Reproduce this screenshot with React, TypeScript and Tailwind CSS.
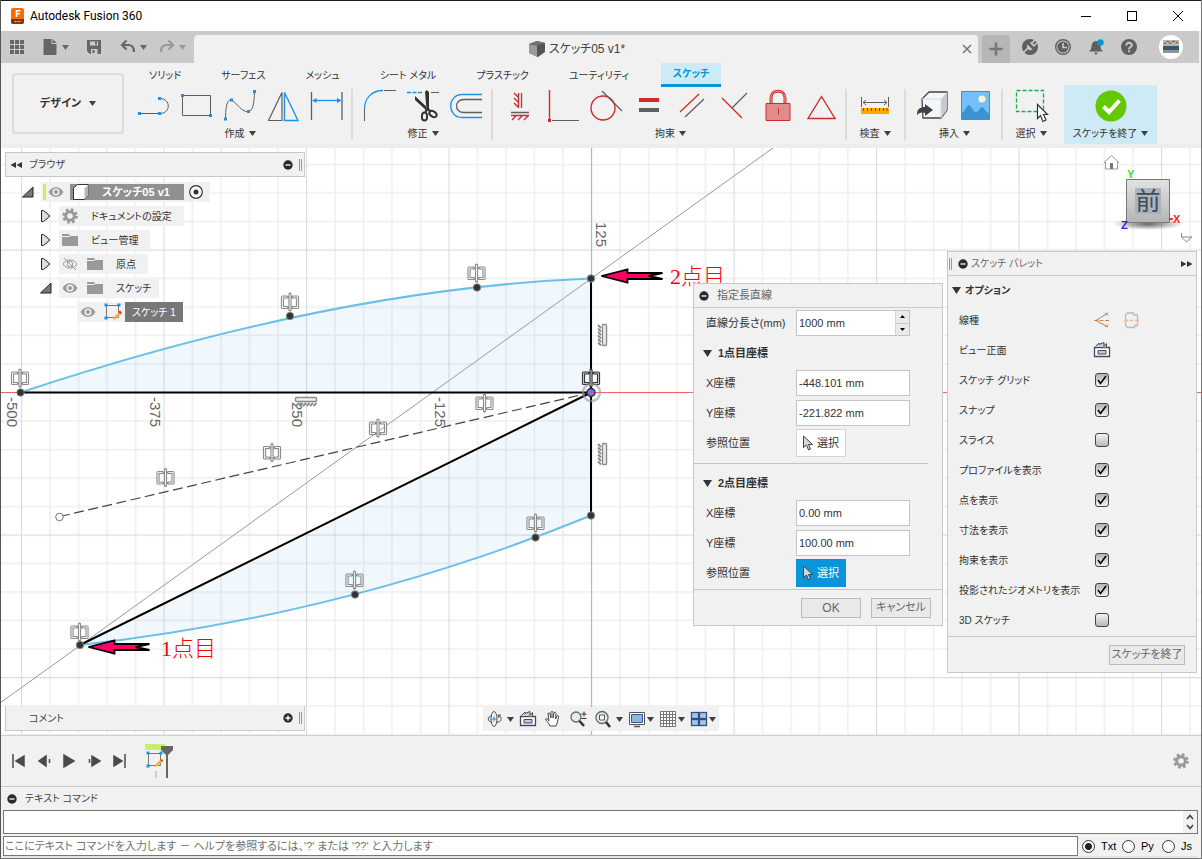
import React from "react";

const BLUE = "#1e90e8";
const GREY = "#5f5f5f";
const RED = "#d02a2a";

const Caret = ({ className = "text-[#404040]" }: { className?: string }) => (
  <svg width="7" height="5" viewBox="0 0 7 5" className={className}>
    <path d="M0 0h7L3.5 5z" fill="currentColor" />
  </svg>
);

const Dot = ({ x, y }: { x: number; y: number }) => (
  <rect x={x - 1.5} y={y - 1.5} width="3" height="3" fill={BLUE} />
);

const Icon = ({
  children,
  size = 32,
}: {
  children: React.ReactNode;
  size?: number;
}) => (
  <svg width={size} height={size} viewBox={`0 0 ${size} ${size}`} fill="none">
    {children}
  </svg>
);

const TitleBar = () => (
  <header className="flex h-[31px] items-center border-t border-[#1a1a1a] bg-white pl-[9px] text-black">
    <Icon size={16}>
      <rect x="1" width="13" height="16" rx="2" fill="#ff6b00" />
      <path d="M1 11h13v3a2 2 0 0 1-2 2H3a2 2 0 0 1-2-2z" fill="#8c3300" />
      <path d="M6.500 9V2.700h4M6.500 5.700h3.200" stroke="#fff" strokeWidth="1.600" />
      <path d="M4.500 13.500h6" stroke="#e8c8b0" strokeDasharray="1.500 .7" />
    </Icon>
    <h1 className="ml-1 flex-1 font-[Roboto,sans-serif] text-[12px]">
      Autodesk Fusion 360
    </h1>
    <button aria-label="Minimize" className="flex w-[46px] justify-center">
      <Icon size={12}>
        <path d="M1 6.500h10" stroke="#000" />
      </Icon>
    </button>
    <button aria-label="Maximize" className="flex w-[46px] justify-center">
      <Icon size={12}>
        <rect x="1.500" y="1.500" width="9" height="9" stroke="#000" />
      </Icon>
    </button>
    <button aria-label="Close" className="flex w-[46px] justify-center">
      <Icon size={12}>
        <path d="M1 1l10 10M11 1L1 11" stroke="#000" />
      </Icon>
    </button>
  </header>
);

const QuickBar = () => (
  <div className="mr-0.5 flex h-8 items-end bg-[#cacaca] text-[#5f5f5f]">
    <div className="flex h-8 w-[193px] shrink-0 items-center pl-[8px]">
      <button aria-label="Data panel">
        <Icon size={16}>
          {[1, 6, 11].map((x) =>
            [1, 6, 11].map((y) => (
              <rect key={`${x}-${y}`} x={x} y={y} width="4" height="4" fill="#666" />
            )),
          )}
        </Icon>
      </button>
      <button aria-label="File" className="ml-[17px] flex items-center gap-1">
        <Icon size={16}>
          <path d="M1.500 0h8v5h5v10a1 1 0 0 1-1 1h-12z" fill="#666" />
          <path d="M10.500 0l4 4h-4z" fill="#666" />
        </Icon>
        <Caret className="text-[#666]" />
      </button>
      <button aria-label="Save" className="ml-[17px]">
        <Icon size={16}>
          <path
            fillRule="evenodd"
            d="M1 1h14v14H4l-3-3zM4 2.500v4h8v-4zM5 10v5h6.500v-5z"
            fill="#666"
          />
          <path d="M9 2.500h2v3H9zM6.500 11h2v3h-2z" fill="#666" />
        </Icon>
      </button>
      <button aria-label="Undo" className="ml-[18px] flex items-center gap-1">
        <Icon size={16}>
          <path d="M6.500 1.500L2 6l4.500 4.500M2.500 6H8c4 0 6 2 6 7" stroke="#666" strokeWidth="2.200" />
        </Icon>
        <Caret className="text-[#666]" />
      </button>
      <button aria-label="Redo" className="ml-3 flex items-center gap-1">
        <Icon size={16}>
          <path d="M9.500 1.500L14 6l-4.500 4.500M13.500 6H8c-4 0-6 2-6 7" stroke="#999" strokeWidth="2.200" />
        </Icon>
        <Caret className="text-[#999]" />
      </button>
    </div>
    <div className="flex h-7 flex-1 items-center rounded-t bg-[#f1f1f1] pr-1">
      <div className="flex flex-1 items-center justify-center gap-1 text-[12px] text-[#404040]">
        <Icon size={16}>
          <path d="M0 3l8-3 8 2v9l-7 5-9-4z" fill="#555" />
          <path d="M0 3l8 1.500V16l-8-4z" fill="#9a9a9a" />
          <path d="M0 3l8-3 8 2-8 2.500z" fill="#707070" />
        </Icon>
        スケッチ05 v1*
      </div>
      <button aria-label="Close document" className="p-0.5">
        <Icon size={10}>
          <path d="M1 1l8 8M9 1L1 9" stroke="#777" strokeWidth="1.500" />
        </Icon>
      </button>
    </div>
    <button
      aria-label="New document"
      className="ml-1 flex h-7 w-7 items-center justify-center rounded-t bg-[#b6b6b6]"
    >
      <Icon size={14}>
        <path d="M7 .500v13M.500 7h13" stroke="#777" strokeWidth="2.600" />
      </Icon>
    </button>
    <div className="flex h-8 items-center gap-[17px] pr-4 pl-3">
      <button aria-label="Extensions">
        <Icon size={16}>
          <circle cx="8" cy="8" r="8" fill="#5f5f5f" />
          <path d="M1 14l5-5M8.500 3.500l4 4M13 1l-3 3M15 4l-3 2.500" stroke="#cacaca" strokeWidth="1.600" />
          <path d="M5.500 5.500l5 5c-3 2-7-1-5-5z" fill="#cacaca" />
        </Icon>
      </button>
      <button aria-label="Job status">
        <Icon size={16}>
          <circle cx="8" cy="8" r="7.300" stroke="#5f5f5f" strokeWidth="1.400" />
          <circle cx="8" cy="8" r="5.600" fill="#5f5f5f" />
          <path d="M8 4v4.500h4" stroke="#cacaca" strokeWidth="1.600" />
        </Icon>
      </button>
      <button aria-label="Notifications">
        <Icon size={16}>
          <path d="M1 12.500c3-2 2-5 3-7.500C5 3 6 2 8 2s3 1 4 3c1 2.500 0 5.500 3 7.500zM6 13.500h4l-2 2.500z" fill="#5f5f5f" />
          <circle cx="12.500" cy="3.500" r="3.200" fill="#0696d7" />
        </Icon>
      </button>
      <button aria-label="Help">
        <Icon size={16}>
          <circle cx="8" cy="8" r="8" fill="#5f5f5f" />
          <path d="M5.300 6.500C5.300 2.700 11 3 10.800 6.300 10.700 8 8 8 8 10.200M8 11.300v2" stroke="#cacaca" strokeWidth="2" />
        </Icon>
      </button>
      <button aria-label="Account" className="ml-[5px]">
        <Icon size={24}>
          <circle cx="12" cy="12" r="12" fill="#fff" />
          <rect x="4" y="5" width="16" height="6" fill="#b9b6a4" />
          <rect x="4" y="11" width="16" height="4" fill="#2f5685" />
          <rect x="4" y="15" width="16" height="3" fill="#8e9599" />
          <path d="M5 9l4-3 2 3 3-3 5 2M5 13h14" stroke="#555" strokeDasharray="3 1" />
        </Icon>
      </button>
    </div>
  </div>
);

const createIcons = [
  {
    name: "線分",
    art: (
      <>
        <path d="M2 24.500h20M22 24.500c11 0 11-15 0-15" stroke={GREY} />
        <Dot x={1.500} y={24.500} />
        <Dot x={21.500} y={24.500} />
        <Dot x={21.500} y={9.500} />
      </>
    ),
  },
  {
    name: "長方形",
    art: (
      <>
        <path d="M1.500 6.500h28v20h-28z" stroke={GREY} />
        <Dot x={1.500} y={6.500} />
        <Dot x={29.500} y={26.500} />
      </>
    ),
  },
  {
    name: "スプライン",
    art: (
      <>
        <path d="M1.500 31C1.500 18 3 9 8 11.500S18 24 25 22.500C30 20 30 12 30.500 3" stroke={GREY} />
        <Dot x={1.500} y={30} />
        <Dot x={7.500} y={11} />
        <Dot x={24.500} y={22.500} />
        <Dot x={30.500} y={2.500} />
      </>
    ),
  },
  {
    name: "ミラー",
    art: (
      <>
        <path d="M15 3.500v28H1.500z" stroke={GREY} strokeWidth="1.200" />
        <path d="M17.500 3.500v28H31z" stroke={BLUE} strokeWidth="1.400" />
      </>
    ),
  },
  {
    name: "スケッチ寸法",
    art: (
      <>
        <path d="M1.500 3v28M32 3v28" stroke={GREY} strokeWidth="1.300" />
        <path d="M4 11.500h25" stroke={BLUE} strokeWidth="1.300" />
        <path d="M2 11.500l4.500-2.500v5zM31.500 11.500L27 9v5z" fill={BLUE} />
      </>
    ),
  },
];

const modifyIcons = [
  {
    name: "フィレット",
    art: (
      <>
        <path d="M.500 20C.500 9 8 1.500 19 1.500" stroke={BLUE} strokeWidth="1.300" />
        <path d="M.500 20v12M20 1.500h12" stroke={GREY} />
      </>
    ),
  },
  {
    name: "トリム",
    art: (
      <>
        <path d="M0 3.500h16" stroke={BLUE} strokeDasharray="4 1.500" strokeWidth="1.300" />
        <path d="M24 3.500h8" stroke={GREY} />
        <path d="M18 3l1.500-2 2.500 2v17h-2.500zM8 7v4l12 11 2-2z" fill="#333" />
        <ellipse cx="17.500" cy="27.500" rx="2.600" ry="4" stroke="#333" strokeWidth="2" />
        <ellipse cx="26" cy="25" rx="4" ry="2.600" transform="rotate(35 26 25)" stroke="#333" strokeWidth="2" />
        <path d="M18.500 23l2-4 3 4" stroke="#333" strokeWidth="2.200" />
      </>
    ),
  },
  {
    name: "オフセット",
    art: (
      <>
        <path d="M32 5.500H12C-3 5.500-3 28.500 12 28.500h20" stroke={BLUE} strokeWidth="1.400" />
        <path d="M32 10.500H14c-10 0-10 13 0 13h18" stroke={GREY} strokeWidth="1.300" />
      </>
    ),
  },
];

const constraintIcons = [
  {
    name: "水平/垂直",
    art: (
      <>
        <path d="M14.500 4v15M10 4l4 4M10 9l4 4M10 14l4 4" stroke={RED} strokeWidth="1.400" />
        <path d="M17.500 4v15M7 23.500h18" stroke={GREY} strokeWidth="1.400" />
        <path d="M7 26.500h18M8 31l4-4M14 31l4-4M20 31l4-4" stroke={RED} strokeWidth="1.400" />
      </>
    ),
  },
  {
    name: "一致",
    art: (
      <>
        <path d="M2.500 1v31" stroke={RED} strokeWidth="1.400" />
        <path d="M5 31.500h27" stroke={GREY} />
        <path d="M1 30h3v3H1z" fill={RED} />
      </>
    ),
  },
  {
    name: "接線",
    art: (
      <>
        <circle cx="13" cy="19" r="12" stroke={RED} strokeWidth="1.400" />
        <path d="M12 2l20 20" stroke={GREY} strokeWidth="1.200" />
      </>
    ),
  },
  {
    name: "同じ値",
    art: (
      <>
        <path d="M6 9h20v4H6z" fill={RED} />
        <path d="M6 19h20v4H6z" fill={GREY} />
      </>
    ),
  },
  {
    name: "平行",
    art: (
      <>
        <path d="M4 23L23 5" stroke={RED} strokeWidth="1.300" />
        <path d="M9 28L28 10" stroke={GREY} strokeWidth="1.300" />
      </>
    ),
  },
  {
    name: "直交",
    art: (
      <>
        <path d="M3 9l20 20" stroke={RED} strokeWidth="1.300" />
        <path d="M13 19L28 4" stroke={GREY} strokeWidth="1.300" />
      </>
    ),
  },
  {
    name: "固定",
    art: (
      <>
        <path d="M9 14V9c0-9 14-9 14 0v5" stroke={RED} strokeWidth="3" />
        <path d="M9 14V9c0-9 14-9 14 0v5" stroke="#e8a0a0" strokeWidth="1" />
        <path d="M4 14.500h24v17H4z" fill="#de8c8c" stroke={RED} />
        <path d="M16.500 19.500v6" stroke={RED} />
      </>
    ),
  },
  {
    name: "中点",
    art: <path d="M16.500 7.500L30 29.500H3z" stroke={RED} strokeWidth="1.400" />,
  },
];

const inspectIcons = [
  {
    name: "計測",
    art: (
      <>
        <path d="M2.500 8v10M29.500 8v10M4 13.500h24M7 11l-3 2.500L7 16M25 11l3 2.500-3 2.500" stroke={GREY} />
        <path d="M2 19h28v6H2z" fill="#ffa800" />
        <path d="M4.500 19v3M8.500 19v3M12.500 19v3M16.500 19v3M20.500 19v3M24.500 19v3M28 19v3" stroke="#7a5000" />
      </>
    ),
  },
];

const insertIcons = [
  {
    name: "挿入",
    art: (
      <>
        <path d="M5 10l7-7h18v18l-6 8H6z" fill="#f4f6f8" stroke="#444" strokeWidth="1.300" />
        <path d="M24 10l6-7v18l-6 8z" fill="#c4cad0" />
        <path d="M5 10h19v19" stroke="#d8dce0" />
        <path d="M0 26c0-6 3-8 8-8v-3l8 6-8 6v-3c-4-1-6 0-8 2z" fill="#3d4248" />
      </>
    ),
  },
  {
    name: "キャンバス",
    art: (
      <>
        <path d="M1.500 2.500h28v28h-28z" fill="#74c0fa" stroke="#3a8fd0" />
        <path d="M2 24c4-3 5-8 7-8s4 7 7 7 4-5 6-5 3 5 7 6v6H2z" fill="#3d93cf" />
        <circle cx="22" cy="10" r="3.500" fill="#fdf6c8" />
      </>
    ),
  },
];

const selectIcons = [
  {
    name: "選択",
    art: (
      <>
        <path d="M1.500 1.500h27v21h-27z" stroke="#22a848" strokeDasharray="4 2" strokeWidth="1.300" />
        <path d="M22.500 15.500v14l3-3 2.500 6 3-1.500-2.500-5.500h4z" fill="#fff" stroke="#333" strokeWidth="1.200" />
      </>
    ),
  },
];

type ToolIcon = { name: string; art: React.ReactNode };

const ToolGroup = ({
  label,
  icons,
  className = "pr-[9px] pl-[11px]",
}: {
  label: string;
  icons: ToolIcon[];
  className?: string;
}) => (
  <div className={`flex flex-col items-center ${className}`}>
    <div className="flex gap-[11px] pt-0.5">
      {icons.map((icon) => (
        <button key={icon.name} aria-label={icon.name}>
          <svg width="32" height="34" viewBox="0 0 32 34" fill="none" overflow="visible">
            {icon.art}
          </svg>
        </button>
      ))}
    </div>
    <button className="flex items-center gap-1 text-[10px] leading-[21px]">
      {label} <Caret />
    </button>
  </div>
);

const Sep = () => <div className="mt-0.5 mb-1 w-0.5 bg-[#dcdcdc]" />;

const tabs = ["ソリッド", "サーフェス", "メッシュ", "シート メタル", "プラスチック", "ユーティリティ"];

const Ribbon = () => (
  <div className="flex border-b-4 border-[#ededed] bg-[#f1f1f1] pl-[11px] text-[#333]">
    <button className="my-2.5 flex w-28 items-center justify-center gap-2 rounded border-2 border-[#dcdcdc] text-[11px] font-bold">
      デザイン <Caret />
    </button>
    <div className="ml-[3px] flex-1">
      <nav className="flex h-6 items-center text-[10px]">
        <div className="flex gap-10 pr-8 pl-[22px]">
          {tabs.map((tab) => (
            <a key={tab} href="#" className="whitespace-nowrap">
              {tab}
            </a>
          ))}
        </div>
        <a
          href="#"
          className="flex h-6 w-[60px] items-center justify-center border-b-[3px] border-[#0696d7] bg-[#cdeaf6] font-bold text-[#0696d7]"
        >
          スケッチ
        </a>
      </nav>
      <div className="flex">
        <ToolGroup label="作成" icons={createIcons} />
        <Sep />
        <ToolGroup label="修正" icons={modifyIcons} />
        <Sep />
        <ToolGroup label="拘束" icons={constraintIcons} className="pr-2 pl-[11px]" />
        <Sep />
        <ToolGroup label="検査" icons={inspectIcons} className="pr-[13px] pl-3" />
        <Sep />
        <ToolGroup label="挿入" icons={insertIcons} />
        <Sep />
        <ToolGroup label="選択" icons={selectIcons} className="pr-[13px] pl-3" />
        <button className="-mt-0.5 ml-1 flex w-[93px] flex-col items-center justify-between bg-[#cdeaf6] pt-[5px] text-[10px]">
          <Icon size={32}>
            <circle cx="16" cy="16" r="15.500" fill="#64c800" />
            <path d="M8.500 16.500l5.500 5.500L24.500 10.500" stroke="#fff" strokeWidth="4" />
          </Icon>
          <span className="flex items-center gap-1 leading-[21px] whitespace-nowrap">
            スケッチを終了 <Caret />
          </span>
        </button>
      </div>
    </div>
  </div>
);

// ---- sketch canvas ----

const Glyph = ({ x, y, dark = false }: { x: number; y: number; dark?: boolean }) => {
  const d = "M-3-5h-4.500V5.500h4.500M3-5h4.500V5.500h-4.500M0-8V8";
  return (
    <g transform={`translate(${x} ${y})`} fill="none">
      <path d={d} stroke={dark ? "#333" : "#8a8a8a"} strokeWidth="3.200" strokeLinejoin="round" strokeLinecap="round" />
      <path d={d} stroke={dark ? "#b8c0c4" : "#f0f0f0"} strokeWidth="1.100" />
    </g>
  );
};

const Ruler = ({ x, y, angle = 0 }: { x: number; y: number; angle?: number }) => (
  <g transform={`translate(${x} ${y}) rotate(${angle})`} fill="#f0f0f0" stroke="#8a8a8a">
    <rect x="-10.500" y="-4.500" width="21" height="4" rx="1" strokeWidth="1.400" />
    <path d="M-10 4l3-3M-6.500 4l3-3M-3 4l3-3M.500 4l3-3M4 4l3-3M7.500 4l3-3" strokeWidth="1.800" />
  </g>
);

const points = [
  [20.5, 392.5],
  [290, 316],
  [477, 287.5],
  [591, 278.5],
  [591, 515.5],
  [535.5, 537.5],
  [355, 594.5],
  [80, 645],
];

const glyphs = [
  [20, 378],
  [290, 302],
  [476.5, 273],
  [484.5, 403],
  [378, 428],
  [272, 452.5],
  [165.5, 477.5],
  [535.5, 523],
  [354.5, 580],
  [79.5, 632],
];

const ARROW =
  "M601.500 276l26-6.500v3.500H662.500l-14 3 14 3h-35v3.500z";

const Sketch = () => (
  <svg className="absolute inset-0 h-full w-full" aria-hidden="true">
    <defs>
      <pattern id="grid" width="142.500" height="142.500" x="20" y="101.500" patternUnits="userSpaceOnUse">
        <path
          d="M29 0v142.500M57.500 0v142.500M86 0v142.500M114.500 0v142.500M0 29h142.500M0 57.500h142.500M0 86h142.500M0 114.500h142.500"
          stroke="#eee"
          strokeWidth="1.500"
        />
        <path d="M.500 0v142.500M0 .500h142.500" stroke="#dcdcdc" strokeWidth="1.300" />
      </pattern>
    </defs>
    <rect width="100%" height="100%" fill="#fff" />
    <rect width="100%" height="100%" fill="url(#grid)" />
    <g transform="translate(-1 -148)" fill="none">
      <path d="M0 392.500h3000" stroke="#f06464" strokeWidth="1.200" />
      <path d="M591.500 148v3000" stroke="#7ee07e" strokeWidth="1.200" />
      <g fill="#3fa9f5" fillOpacity=".08">
        <path d="M20.500 392.500C210 329.500 401 286 591 278.500v114z" />
        <path d="M80 645C250 626 421 585 591 515.500v-123z" />
      </g>
      <path d="M0 703L773 148" stroke="#999" />
      <path d="M60 516.500L591 392.500" stroke="#444" strokeWidth="1.200" strokeDasharray="10 4.500" />
      <path
        d="M20.500 392.500C210 329.500 401 286 591 278.500M80 645C250 626 421 585 591 515.500"
        stroke="#6cc0e8"
        strokeWidth="2"
      />
      <path d="M20.500 392.500H591M591 278.500v237M80 645L591 392.500" stroke="#000" strokeWidth="2" />
      <g
        fill="#666"
        className="font-['Liberation_Sans',sans-serif] text-[15px]"
      >
        <text transform="translate(7 397) rotate(90)">-500</text>
        <text transform="translate(150 397) rotate(90)">-375</text>
        <text transform="translate(292 402) rotate(90)">250</text>
        <text transform="translate(435 397) rotate(90)">-125</text>
        <text transform="translate(596 222) rotate(90)">125</text>
      </g>
      {glyphs.map(([x, y]) => (
        <Glyph key={`${x}-${y}`} x={x} y={y} />
      ))}
      <Glyph x={591} y={378} dark />
      <Ruler x={306} y={402} />
      <Ruler x={602} y={335} angle={90} />
      <Ruler x={602} y={454} angle={90} />
      {points.map(([x, y]) => (
        <circle key={`${x}-${y}`} cx={x} cy={y} r="3.700" fill="#333" stroke="#888" />
      ))}
      <circle cx="59.500" cy="517" r="3.800" stroke="#777" fill="#fff" />
      <circle cx="591.500" cy="392.500" r="8.500" stroke="#999" strokeOpacity=".6" strokeWidth="2.500" />
      <circle cx="591" cy="392.500" r="4" fill="#8a70c8" stroke="#33264d" strokeWidth="1.500" />
      <g fill="#ff0066" stroke="#000" strokeWidth="1.800">
        <path d={ARROW} />
        <path d={ARROW} transform="translate(-513 371)" />
      </g>
      <g fill="#f00" className="font-['Liberation_Serif','Noto_Sans_CJK_JP',serif] text-[22px] font-light">
        <text x="670" y="284">2点目</text>
        <text x="161" y="656">1点目</text>
      </g>
    </g>
  </svg>
);

const Minus = ({ plus = false }: { plus?: boolean }) => (
  <Icon size={10}>
    <circle cx="5" cy="5" r="4.700" fill="#2a2a2a" />
    <path d={plus ? "M2.500 5h5M5 2.500v5" : "M2.500 5h5"} stroke="#fff" strokeWidth="1.300" />
  </Icon>
);

const Eye = () => (
  <Icon size={16}>
    <path d="M.500 8C4 1.500 12 1.500 15.500 8 12 14.500 4 14.500.500 8z" fill="#999" />
    <circle cx="8" cy="8" r="3.600" fill="#f1f1f1" />
    <circle cx="8" cy="8" r="2" fill="#999" />
  </Icon>
);

const EyeOff = () => (
  <Icon size={16}>
    <path d="M1 8c3-5.500 11-5.500 14 0-3 5.500-11 5.500-14 0zM2 2l12 12" stroke="#999" />
    <circle cx="8" cy="8" r="2.800" stroke="#999" />
  </Icon>
);

const Folder = () => (
  <Icon size={16}>
    <path d="M0 2h7l1 2h8v10H0z" fill="#999" />
    <path d="M0 4.500h7.500L9 3" stroke="#f1f1f1" />
  </Icon>
);

const Gear = () => (
  <Icon size={16}>
    <circle cx="8" cy="8" r="6.300" stroke="#999" strokeWidth="3" strokeDasharray="2.600 2.350" />
    <circle cx="8" cy="8" r="4.300" stroke="#999" strokeWidth="3" />
  </Icon>
);

const SketchIcon = () => (
  <Icon size={18}>
    <path d="M2.500 2.500h12v12h-12z" stroke="#777" />
    <Dot x={2} y={2} />
    <Dot x={15} y={2} />
    <Dot x={2} y={15} />
    <path d="M9 17l1-3 5-5 2 2-5 5z" fill="#f5b041" />
    <path d="M14 9l2-1.500 2 2-1.500 2z" fill="#e84040" />
  </Icon>
);

const Cube = () => (
  <Icon size={18}>
    <path d="M1.500 5l4-3.500h11V12l-4 4.500h-11z" fill="#fff" stroke="#333" />
    <path d="M12.500 5.500l4-4V12l-4 4.500z" fill="#b0b8c0" />
  </Icon>
);

const Expand = ({ open = false }: { open?: boolean }) => (
  <button aria-label={open ? "Collapse" : "Expand"} className="mr-[7px] w-3">
    <Icon size={12}>
      {open ? (
        <path d="M11 1v10H.500z" fill="#777" stroke="#222" />
      ) : (
        <path d="M1.500.500h2L10 6l-6.500 5.500h-2z" fill="#ddd" stroke="#222" />
      )}
    </Icon>
  </button>
);

const chip = "flex h-5 items-center bg-[#f1f1f1]";

const BrowserPanel = () => (
  <div className="w-[300px]">
    <div className="flex h-[25px] items-center border border-[#c8c8c8] bg-[#f1f1f1] pr-0.5 pl-1">
      <Icon size={12}>
        <path d="M6 3v6L.500 6zM12 3v6L6.500 6z" fill="#333" />
      </Icon>
      <h2 className="ml-[7px] flex-1 text-[10px] text-[#444]">ブラウザ</h2>
      <button aria-label="Collapse browser">
        <Minus />
      </button>
      <span className="ml-1.5 h-3 w-[3px] border-x border-[#999]" />
    </div>
    <ul className="mt-[5px] flex flex-col gap-1 text-[10px]">
      <li className="flex items-center pl-[17px]">
        <Expand open />
        <div className={`${chip} w-[169px] gap-0.5 pl-0.5`}>
          <span className="h-4 w-[3px] bg-[#c5f06c]" />
          <Eye />
          <span className="ml-1 flex h-4 flex-1 items-center gap-3 bg-[#909090] pl-0.5 text-[11px] font-bold whitespace-nowrap text-white">
            <Cube /> スケッチ05 v1
          </span>
          <span className="pr-1.5 pl-0.5">
            <Icon size={16}>
              <circle cx="8" cy="8" r="6.300" stroke="#333" fill="#fff" strokeWidth="1.200" />
              <circle cx="8" cy="8" r="2.500" fill="#333" />
            </Icon>
          </span>
        </div>
      </li>
      <li className="flex items-center pl-[35px]">
        <Expand />
        <div className={`${chip} gap-[13px] pr-3 pl-[3px]`}>
          <Gear /> ドキュメントの設定
        </div>
      </li>
      <li className="flex items-center pl-[35px]">
        <Expand />
        <div className={`${chip} gap-[13px] pr-3 pl-[3px]`}>
          <Folder /> ビュー管理
        </div>
      </li>
      <li className="flex items-center pl-[35px]">
        <Expand />
        <div className={`${chip} pr-3 pl-[3px]`}>
          <EyeOff />
          <span className="mr-[13px] ml-[9px]">
            <Folder />
          </span>
          原点
        </div>
      </li>
      <li className="flex items-center pl-[35px]">
        <Expand open />
        <div className={`${chip} pr-2 pl-[3px]`}>
          <Eye />
          <span className="mr-[13px] ml-[9px]">
            <Folder />
          </span>
          スケッチ
        </div>
      </li>
      <li className="flex items-center pl-[72px]">
        <div className={`${chip} gap-2 px-[3px]`}>
          <Eye />
          <SketchIcon />
        </div>
        <span className="flex h-5 items-center bg-[#787878] px-[7px] text-white">
          スケッチ 1
        </span>
      </li>
    </ul>
  </div>
);

const CommentPanel = () => (
  <div className="flex h-[25px] w-[300px] items-center border border-t-0 border-[#c8c8c8] bg-[#f1f1f1] pr-0.5 pl-[23px]">
    <h2 className="flex-1 text-[10px] text-[#444]">コメント</h2>
    <button aria-label="Add comment">
      <Minus plus />
    </button>
    <span className="ml-1.5 h-3 w-[3px] border-x border-[#999]" />
  </div>
);

const Cursor = () => (
  <Icon size={16}>
    <path d="M4.500 1v11.500l3-2.500 2 5 2-1-2-4.500h4z" fill="#d0d8e0" stroke="#444" />
  </Icon>
);

const Field = ({ id, label, value }: { id: string; label: string; value: string }) => (
  <div className="flex h-[30px] items-center pl-3">
    <label htmlFor={id} className="w-[90px] whitespace-nowrap">
      {label}
    </label>
    <input
      id={id}
      defaultValue={value}
      className="h-[26px] w-[114px] border border-[#c4c4c4] bg-white px-0.5"
    />
  </div>
);

const PickRow = ({ active = false }: { active?: boolean }) => (
  <div className="flex h-[30px] items-center pl-3">
    <span className="w-[90px]">参照位置</span>
    <button
      className={`flex h-7 w-[50px] items-center justify-center gap-0.5 border pr-1 ${
        active
          ? "border-[#0696d7] bg-[#0a94da] text-white"
          : "border-[#d4d4d4] bg-white"
      }`}
    >
      <Cursor />
      選択
    </button>
  </div>
);

const SectionTitle = ({ children }: { children: React.ReactNode }) => (
  <h3 className="flex h-[30px] items-center gap-1.5 pl-[9px] font-bold">
    <svg width="9" height="7" viewBox="0 0 9 7">
      <path d="M0 0h9L4.500 7z" fill="#333" />
    </svg>
    {children}
  </h3>
);

const LineDialog = () => (
  <section className="absolute top-[135px] right-[258px] w-[250px] border border-[#c8c8c8] bg-[#f1f1f1] text-[11px] text-[#333]">
    <h2 className="flex h-6 items-center gap-2 border-b border-[#c8c8c8] pl-[5px] text-[#666]">
      <Minus /> 指定長直線
    </h2>
    <div className="flex h-[30px] items-center pl-3">
      <label htmlFor="length" className="w-[90px] whitespace-nowrap">
        直線分長さ(mm)
      </label>
      <div className="flex h-[26px] w-[114px] border border-[#c4c4c4] bg-white">
        <input id="length" defaultValue="1000 mm" className="min-w-0 flex-1 px-0.5" />
        <div className="flex w-3.5 flex-col border-l border-[#d4d4d4] bg-[#eaeaea]">
          <button aria-label="Increase" className="flex flex-1 items-center justify-center border-b border-[#ccc]">
            <svg width="5" height="3" viewBox="0 0 5 3">
              <path d="M0 3h5L2.500 0z" />
            </svg>
          </button>
          <button aria-label="Decrease" className="flex flex-1 items-center justify-center">
            <svg width="5" height="3" viewBox="0 0 5 3">
              <path d="M0 0h5L2.500 3z" />
            </svg>
          </button>
        </div>
      </div>
    </div>
    <SectionTitle>1点目座標</SectionTitle>
    <Field id="x1" label="X座標" value="-448.101 mm" />
    <Field id="y1" label="Y座標" value="-221.822 mm" />
    <PickRow />
    <hr className="mt-[5px] mr-3.5 mb-1 border-[#c4c4c4]" />
    <SectionTitle>2点目座標</SectionTitle>
    <Field id="x2" label="X座標" value="0.00 mm" />
    <Field id="y2" label="Y座標" value="100.00 mm" />
    <PickRow active />
    <div className="mt-px flex h-9 items-center justify-end gap-2.5 border-t border-[#c8c8c8] pr-[11px] text-[12px] text-[#666]">
      <button className="h-5 w-[60px] border border-[#bbb] bg-[#e9e9e9] leading-none">OK</button>
      <button className="h-5 w-[60px] border border-[#bbb] bg-[#e9e9e9] text-[11px] leading-none whitespace-nowrap">
        キャンセル
      </button>
    </div>
  </section>
);

const options = [
  { label: "スケッチ グリッド", on: true },
  { label: "スナップ", on: true },
  { label: "スライス", on: false },
  { label: "プロファイルを表示", on: true },
  { label: "点を表示", on: true },
  { label: "寸法を表示", on: true },
  { label: "拘束を表示", on: true },
  { label: "投影されたジオメトリを表示", on: true },
  { label: "3D スケッチ", on: false },
];

const LookAt = () => (
  <Icon size={18}>
    <path d="M1.500 6.500h15v9h-15z" fill="#fff" stroke="#444c58" strokeWidth="1.300" />
    <path d="M5 9.500h8v3.500H5z" fill="#c0cad8" stroke="#444c58" />
    <path d="M2.500 5.500L6 2v1.500L11 1.500v4l2.500-3v4" fill="#c8ced6" stroke="#444c58" />
  </Icon>
);

const SketchPalette = () => (
  <section className="absolute top-[103px] right-[4px] w-[250px] border border-[#c8c8c8] bg-[#f1f1f1] text-[10px] text-[#333]">
    <h2 className="flex h-6 items-center border-b border-[#c8c8c8] pr-[3px] pl-px text-[#666]">
      <span className="mr-1.5 h-3 w-[3px] border-x border-[#999]" />
      <Minus />
      <span className="ml-[3px] flex-1">スケッチ パレット</span>
      <Icon size={12}>
        <path d="M0 3v6l5.500-3zM6 3v6l5.500-3z" fill="#333" />
      </Icon>
    </h2>
    <h3 className="flex h-[29px] items-center gap-1 pl-1 text-[10px] font-bold">
      <svg width="9" height="7" viewBox="0 0 9 7">
        <path d="M0 0h9L4.500 7z" fill="#333" />
      </svg>
      オプション
    </h3>
    <div className="flex h-[30px] items-center pl-[11px]">
      <span className="w-[134px]">線種</span>
      <button aria-label="コンストラクション" className="mr-3">
        <Icon size={18}>
          <path d="M15 2L3 9.500 15 16" stroke="#888" />
          <path d="M1 9.500h16M12 2l4 3M12 16l4-3" stroke="#e08040" strokeDasharray="4 1.500" />
        </Icon>
      </button>
      <button aria-label="中心線">
        <Icon size={18}>
          <path d="M2.500 4l2-2h6v2h4v10.500h-3v2h-7l-2-2z" stroke="#bbb" strokeWidth="1.300" />
          <path d="M1 9.500h16" stroke="#f0b890" strokeDasharray="4 1.500" strokeWidth="1.300" />
        </Icon>
      </button>
    </div>
    <div className="flex h-[30px] items-center pl-[11px]">
      <span className="w-[134px]">ビュー正面</span>
      <button aria-label="ビュー正面">
        <LookAt />
      </button>
    </div>
    {options.map((option, i) => (
      <div key={option.label} className="flex h-[30px] items-center pl-[11px]">
        <label htmlFor={`option-${i}`} className="w-[136px] whitespace-nowrap">
          {option.label}
        </label>
        <span className="grid">
          <input
            id={`option-${i}`}
            type="checkbox"
            defaultChecked={option.on}
            className="peer col-start-1 row-start-1 h-3.5 w-3.5 appearance-none rounded-[3px] border border-[#444] bg-linear-to-b from-[#f4f4f4] to-[#b8b8b8] checked:from-[#b4b4b4] checked:to-[#f0f0f0]"
          />
          <svg
            viewBox="0 0 14 14"
            className="pointer-events-none col-start-1 row-start-1 hidden h-3.5 w-3.5 peer-checked:block"
          >
            <path d="M3 7l2.500 3.500L11 3" fill="none" stroke="#000" strokeWidth="1.500" />
          </svg>
        </span>
      </div>
    ))}
    <div className="mt-px flex h-9 items-center justify-end border-t border-[#c8c8c8] pr-[11px]">
      <button className="h-5 w-[76px] border border-[#bbb] bg-[#e9e9e9] text-[11px] leading-none whitespace-nowrap text-[#666]">
        スケッチを終了
      </button>
    </div>
  </section>
);

const ViewCube = () => (
  <svg
    width="100"
    height="96"
    viewBox="1102 152 100 96"
    fill="none"
    className="absolute top-1 right-[-1px]"
  >
    <defs>
      <linearGradient id="face" x1="0" y1="0" x2="0" y2="1">
        <stop offset="0" stopColor="#e2e2e2" />
        <stop offset="1" stopColor="#b4b4b4" />
      </linearGradient>
      <radialGradient id="shade">
        <stop offset="0" stopColor="#666" />
        <stop offset="1" stopColor="#666" stopOpacity="0" />
      </radialGradient>
    </defs>
    <path d="M1104 162.500l7.500-7 7.500 7h-1.500v6.500h-12v-6.500z" fill="#fff" stroke="#999" />
    <path d="M1110 163h3v6h-3z" fill="#777" />
    <ellipse cx="1148" cy="224" rx="35" ry="6" fill="url(#shade)" />
    <path d="M1126.500 179.500h43v43h-43z" fill="url(#face)" stroke="#777" />
    <path d="M1135 188h26v26h-26z" fill="#aab4c0" />
    <path d="M1169 219h4" stroke="red" strokeWidth="1.500" />
    <g className="font-['Liberation_Sans','Noto_Sans_CJK_JP',sans-serif] text-[11px] font-bold">
      <text x="1127" y="178" fill="#2be62b">Y</text>
      <text x="1173" y="223" fill="#f22">X</text>
      <text x="1121" y="229" fill="#22f">Z</text>
    </g>
    <text x="1148" y="210" textAnchor="middle" fill="#424b58" className="font-['Noto_Sans_CJK_JP',sans-serif] text-[25px]">
      前
    </text>
    <path d="M1181.500 233v4h10.500l-5.500 5-5-5" stroke="#888" />
  </svg>
);

const Glass = ({ children }: { children?: React.ReactNode }) => (
  <Icon size={18}>
    <circle cx="7" cy="7" r="5" fill="#e0eeee" stroke="#667" strokeWidth="1.300" />
    <path d="M10.500 11l4.500 5" stroke="#333" strokeWidth="2.600" />
    {children}
  </Icon>
);

const NavBar = () => (
  <div className="absolute bottom-1 left-1/2 flex h-6 -translate-x-1/2 items-center gap-[5px] bg-[#f1f1f1] px-[3px]">
    <button aria-label="Orbit" className="flex items-center gap-[3px]">
      <Icon size={18}>
        <ellipse cx="8" cy="9" rx="3" ry="7.500" stroke="#555" />
        <path d="M6 6C1 6 1 12 6 12M10 12c6 1 7-5 2-7l1 3M12 5l3 0" stroke="#555" />
        <path d="M8 6.500v5M5.500 9h5" stroke={BLUE} />
      </Icon>
      <Caret />
    </button>
    <button aria-label="Look at">
      <LookAt />
    </button>
    <button aria-label="Pan" className="ml-0.5">
      <Icon size={18}>
        <path
          d="M6 16c-1-3-4-5-4.500-7 1-1 2 0 3.500 2L4 4c0-1.500 1.500-1.500 2 0l1 4V2.500c0-1.500 2-1.500 2 0V8l1-5c.500-1.500 2-1 2 .500L11.500 9 13 6c1-1 2 0 1.500 1-1 4-1 6-2.500 9z"
          fill="#fff"
          stroke="#444"
        />
      </Icon>
    </button>
    <button aria-label="Zoom" className="ml-0.5">
      <Glass>
        <path d="M12.500 4h5M15 1.500v5M12.500 8.500h5" stroke="#333" />
      </Glass>
    </button>
    <button aria-label="Fit" className="ml-0.5 flex items-center gap-1">
      <Icon size={18}>
        <circle cx="8" cy="7.500" r="6" fill="#e0eeee" stroke="#667" strokeWidth="1.300" />
        <path d="M12 12l4 5" stroke="#333" strokeWidth="2.600" />
        <path d="M5.500 5h5v5h-5z" fill="#fff" stroke="#555" />
      </Icon>
      <Caret />
    </button>
    <button aria-label="Display settings" className="flex items-center gap-px">
      <Icon size={18}>
        <path d="M1.500 2.500h15v12h-15z" fill="#fff" stroke="#555" />
        <path d="M3.500 4.500h11v8h-11z" fill="#90b4e0" stroke="#3458a0" />
        <path d="M6 16.500h6" stroke="#555" strokeWidth="1.500" />
      </Icon>
      <Caret />
    </button>
    <button aria-label="Grid and snaps" className="flex items-center gap-px">
      <Icon size={18}>
        <path
          d="M1.500 1.500h15v15h-15zM4.500 1.500v15M7.500 1.500v15M10.500 1.500v15M13.500 1.500v15M1.500 4.500h15M1.500 7.500h15M1.500 10.500h15M1.500 13.500h15"
          fill="#fff"
          stroke="#777"
        />
      </Icon>
      <Caret />
    </button>
    <button aria-label="Viewports" className="flex items-center gap-px">
      <Icon size={18}>
        {[
          [1.5, 2.5],
          [9.5, 2.5],
          [1.5, 9.5],
          [9.5, 9.5],
        ].map(([x, y]) => (
          <rect key={`${x}-${y}`} x={x} y={y} width="7" height="6" fill="#a8c4ea" stroke="#34507c" strokeWidth="1.300" />
        ))}
      </Icon>
      <Caret />
    </button>
  </div>
);

const playback = [
  { name: "Start", d: "M2 3v14M13 5v10L5 10z" },
  { name: "Step back", d: "M10 5v10L3 10zM13.500 8v4" },
  { name: "Play", d: "M3 4v12l10-6z" },
  { name: "Step forward", d: "M6 5v10l8-5zM3.500 8v4" },
  { name: "End", d: "M14 3v14M3 5v10l8-5z" },
];

const Timeline = () => (
  <div className="flex h-[51px] items-center border-t border-[#d0d0d0] bg-[#f1f1f1] pr-3 pl-2.5">
    <div className="flex gap-2">
      {playback.map((item) => (
        <button key={item.name} aria-label={item.name}>
          <svg width="17" height="20" viewBox="0 0 17 20">
            <path d={item.d} fill="#4a4a4a" stroke="#4a4a4a" strokeWidth="1.500" />
          </svg>
        </button>
      ))}
    </div>
    <svg width="32" height="40" viewBox="0 0 32 40" fill="none" className="ml-4">
      <path d="M1 3h20v6H1z" fill="#c5f06c" />
      <path d="M4.500 12.500h12v12h-12z" stroke="#777" />
      <Dot x={4} y={12} />
      <Dot x={17} y={12} />
      <Dot x={4} y={25} />
      <path d="M11 26l1-3 5-5 2 2-5 5z" fill="#f5b041" />
      <path d="M16 19l2-1 1 2-1 1z" fill="#e84040" />
      <path d="M12 30v7" stroke="#ccc" strokeWidth="2" />
      <path d="M17 5h12v4l-5 5v23h-2V14l-5-5z" fill="#666" />
    </svg>
    <button aria-label="Timeline settings" className="ml-auto">
      <Gear />
    </button>
  </div>
);

const TextCommands = () => (
  <section className="border-t border-[#c8c8c8] bg-[#f1f1f1] pr-[3px] pl-0.5">
    <h2 className="flex h-[23px] items-center gap-2 pl-1 text-[10px] text-[#444]">
      <Minus /> テキスト コマンド
    </h2>
    <div className="flex h-6 border border-[#777] bg-white">
      <textarea aria-label="テキスト コマンド" className="min-w-0 flex-1 resize-none" />
      <div className="flex w-3.5 flex-col items-center justify-between bg-[#f1f1f1] py-[3px]">
        <button aria-label="Scroll up" className="leading-none">
          <svg width="8" height="6" viewBox="0 0 8 6" fill="none">
            <path d="M1 5l3-3.500L7 5" stroke="#444" strokeWidth="1.600" />
          </svg>
        </button>
        <button aria-label="Scroll down" className="leading-none">
          <svg width="8" height="6" viewBox="0 0 8 6" fill="none">
            <path d="M1 1l3 3.500L7 1" stroke="#444" strokeWidth="1.600" />
          </svg>
        </button>
      </div>
    </div>
    <div className="mt-0.5 flex items-center gap-1 border-b-2 border-[#e4e4e4] text-[11px]">
      <input
        aria-label="コマンド入力"
        placeholder="ここにテキスト コマンドを入力します － ヘルプを参照するには、'?' または '??' と入力します"
        className="h-5 min-w-0 flex-1 border border-[#777] bg-white px-px placeholder:text-[#707070]"
      />
      {["Txt", "Py", "Js"].map((mode) => (
        <label key={mode} className="flex min-w-9 items-center gap-1.5 text-black">
          <input
            type="radio"
            name="mode"
            defaultChecked={mode === "Txt"}
            className="h-[13px] w-[13px] appearance-none rounded-full border border-[#333] bg-white checked:bg-[radial-gradient(#222_0_3px,#fff_4px)]"
          />
          {mode}
        </label>
      ))}
    </div>
  </section>
);

const App = () => {
  return (
    <div className="flex min-h-screen flex-col border-r border-b border-l border-r-[#777] border-b-[#777] border-l-[#555] bg-[#f1f1f1] font-['Liberation_Sans','Noto_Sans_CJK_JP',sans-serif] text-[#333] [font-feature-settings:'palt']">
      <TitleBar />
      <QuickBar />
      <Ribbon />
      <main className="relative flex min-h-[560px] flex-1 flex-col justify-between overflow-hidden py-1 pl-1">
        <Sketch />
        <div className="relative">
          <BrowserPanel />
        </div>
        <div className="relative">
          <CommentPanel />
        </div>
        <ViewCube />
        <NavBar />
        <LineDialog />
        <SketchPalette />
      </main>
      <Timeline />
      <TextCommands />
    </div>
  );
};

export default App;
